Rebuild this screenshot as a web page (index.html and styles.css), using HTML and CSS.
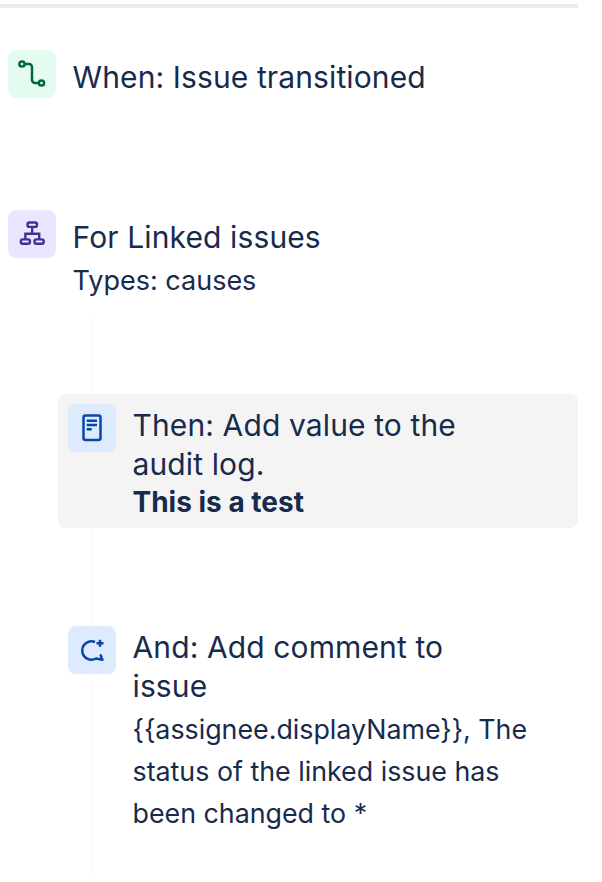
FILE: index.html
```html
<!DOCTYPE html>
<html lang="en">
<head>
<meta charset="utf-8">
<title>Automation rule</title>
<link rel="stylesheet" href="styles.css">
</head>
<body>
<main class="rule">
  <div class="topbar"></div>
  <section class="step step-when">
    <span class="icon icon-green">
      <svg width="48" height="48" viewBox="0 0 48 48" fill="none" stroke="#006644" stroke-width="2.5"><circle cx="14" cy="14" r="2.6"/><circle cx="33.5" cy="33" r="2.6"/><path d="M16.6 14H21a3 3 0 0 1 3 3v13a3 3 0 0 0 3 3h3.9"/></svg>
    </span>
    <div class="body body-top"><h2 class="title">When: Issue transitioned</h2></div>
  </section>
  <section class="step step-for">
    <span class="icon icon-purple">
      <svg width="48" height="48" viewBox="0 0 48 48" fill="none" stroke="#403294" stroke-width="2.4"><rect x="19.5" y="12.5" width="9.5" height="4.4" rx="2"/><rect x="12.8" y="29.4" width="9.2" height="4.4" rx="2"/><rect x="26.5" y="29.4" width="9.2" height="4.4" rx="2"/><path d="M24.2 17v6.8M17.4 29.4v-5.6h13.8v5.6"/></svg>
    </span>
    <div class="body body-top">
      <h2 class="title">For Linked issues</h2>
      <p class="types">Types: causes</p>
    </div>
  </section>
  <div class="branch">
    <div class="branch-line"></div>
    <section class="step step-then">
      <span class="icon icon-blue">
        <svg width="48" height="48" viewBox="0 0 48 48" fill="none" stroke="#0747A6" stroke-width="2.5"><rect x="15.5" y="11.5" width="17" height="24.5" rx="2"/><path d="M18.7 16.7H29M18.7 21H29M18.7 25.3h5"/></svg>
      </span>
      <div class="body body-step">
        <h2 class="title">Then: Add value to the audit log.</h2>
        <p class="strong">This is a test</p>
      </div>
    </section>
    <section class="step step-and">
      <span class="icon icon-blue">
        <svg width="48" height="48" viewBox="0 0 48 48" fill="none" stroke="#0747A6" stroke-width="2.5" stroke-linejoin="round"><path d="M27 16A9.2 9.2 0 1 0 28 32.5L34.5 33.8C33.6 32.2 33 30.4 32.4 28.4"/><path d="M32 13.8v7M28.5 17.3h7"/></svg>
      </span>
      <div class="body body-step">
        <h2 class="title">And: Add comment to issue</h2>
        <p class="desc">{{assignee.displayName}}, The status of the linked issue has been changed to *</p>
      </div>
    </section>
  </div>
</main>
</body>
</html>
```

FILE: styles.css
```css
* { box-sizing: border-box; }
html, body { margin: 0; padding: 0; background: #fff; }
body {
  font-family: Inter, "Noto Sans", "Liberation Sans", sans-serif;
  color: #172b4d;
}
.rule { width: 578px; height: 882px; padding-top: 4px; overflow: hidden; }
.topbar { height: 4px; background: #ebecf0; }
.step { display: flex; gap: 16.5px; }
.step-when { margin: 42px 0 0 8px; }
.step-for { margin: 112px 0 0 8px; }
.branch { position: relative; margin-top: 97px; }
.branch-line {
  position: absolute;
  left: 92px;
  top: -78px;
  height: 562px;
  border-left: 1px dotted #f4f4f6;
}
.step-then {
  position: relative;
  margin-left: 58px;
  padding: 10px;
  height: 134px;
  background: #f4f4f5;
  border-radius: 8px;
}
.step-and { position: relative; margin: 98px 0 0 68px; }
.icon {
  flex: none;
  width: 48px;
  height: 48px;
  border-radius: 8px;
  display: flex;
  align-items: center;
  justify-content: center;
}
.icon-green { background: #e3fcef; }
.icon-purple { background: #eae6ff; }
.icon-blue { background: #deebff; }
.body { flex: 1; min-width: 0; }
.body-top { padding-top: 8px; }
.body-step { padding-top: 2px; max-width: 400px; }
.title {
  margin: 0;
  max-width: 370px;
  font-size: 30px;
  font-weight: 400;
  letter-spacing: 0.12px;
  line-height: 39px;
}
.types { margin: 8px 0 0; font-size: 27px; line-height: 32px; }
.strong { margin: 0; font-size: 28px; font-weight: 700; line-height: 36px; }
.desc { margin: 2px 0 0; font-size: 26.8px; line-height: 42px; }
```
